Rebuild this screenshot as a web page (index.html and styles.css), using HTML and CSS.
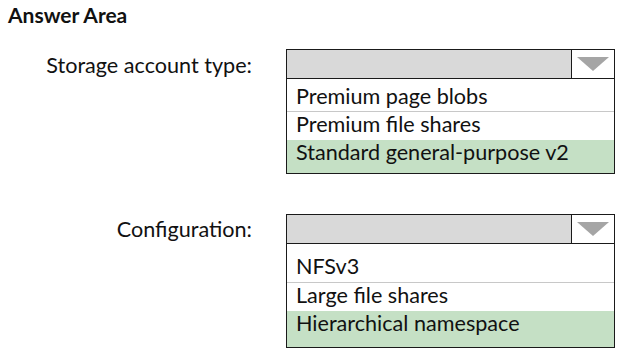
FILE: index.html
```html
<!DOCTYPE html>
<html>
<head>
<meta charset="utf-8">
<link rel="stylesheet" href="styles.css">
</head>
<body>
<div class="page">
  <h1 class="title">Answer Area</h1>
  <div class="question q1">
    <div class="label">Storage account type:</div>
    <div class="dropdown">
      <div class="head"><div class="field"></div><div class="arrow"><svg width="32" height="14" viewBox="0 0 32 14"><polygon points="0,0 32,0 16,14" fill="#a5a5a5"/></svg></div></div>
      <div class="opt o1">Premium page blobs</div>
      <div class="opt o2">Premium file shares</div>
      <div class="opt o3 sel">Standard general-purpose v2</div>
    </div>
  </div>
  <div class="question q2">
    <div class="label">Configuration:</div>
    <div class="dropdown">
      <div class="head"><div class="field"></div><div class="arrow"><svg width="32" height="14" viewBox="0 0 32 14"><polygon points="0,0 32,0 16,14" fill="#a5a5a5"/></svg></div></div>
      <div class="opt p1">NFSv3</div>
      <div class="opt p2">Large file shares</div>
      <div class="opt p3 sel">Hierarchical namespace</div>
    </div>
  </div>
</div>
</body>
</html>
```
FILE: styles.css
```css
html, body { margin: 0; padding: 0; background: #fff; }
body { width: 624px; height: 355px; overflow: hidden; font-family: Lato, "Liberation Sans", sans-serif; color: #111; }
.page { padding: 4px 0 0 8px; }
.title { margin: 0; font-size: 21px; font-weight: 700; line-height: 22px; height: 22px; }
.question { display: flex; align-items: flex-start; }
.q1 { margin-top: 23px; }
.q2 { margin-top: 40px; }
.label { width: 244px; text-align: right; font-size: 21.6px; line-height: 24px; padding-top: 4px; }
.q2 .label { padding-top: 3px; }
.dropdown { margin-left: 34px; width: 327px; border: 1px solid #1a1a1a; }
.head { display: flex; height: 28px; border-bottom: 1px solid #1a1a1a; }
.field { flex: 1; background: #d9d9d9; }
.arrow { width: 43px; border-left: 1px solid #1a1a1a; background: #fff; display: flex; justify-content: center; padding-top: 7px; box-sizing: border-box; }
.opt { font-size: 21.6px; line-height: 24px; padding-left: 9px; box-sizing: border-box; }
.o1 { height: 33px; padding-top: 5px; border-bottom: 1px solid #c8c8c8; }
.o2 { height: 28px; padding-top: 0; }
.o3 { height: 33px; }
.p1 { height: 39px; padding-top: 10px; border-bottom: 1px solid #c8c8c8; }
.p2 { height: 28px; padding-top: 0; }
.p3 { height: 36px; }
.sel { background: #c5e0c5; }
```
